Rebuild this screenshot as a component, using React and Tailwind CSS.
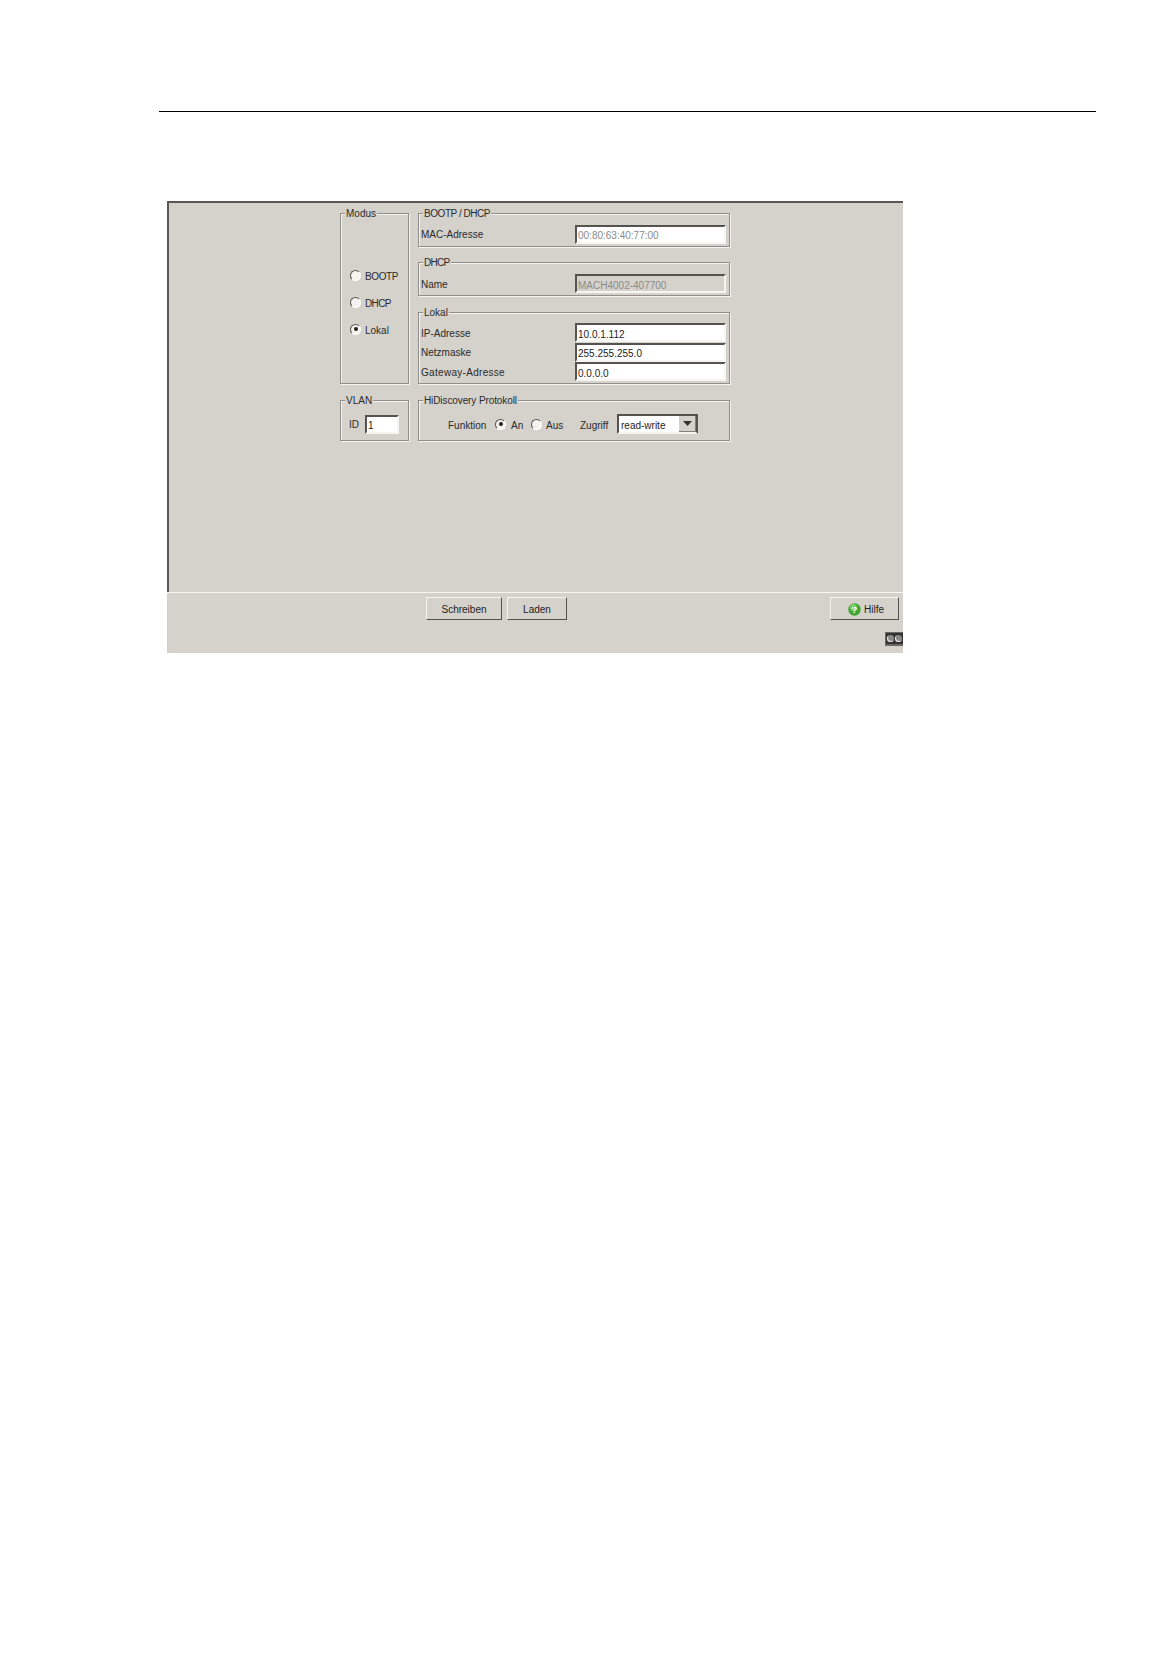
import React from 'react'

const Radio = ({ checked, className = '' }) => (
  <span className={`relative block w-[11px] h-[11px] rounded-full bg-[#f4f3f0] border border-t-[#55534f] border-l-[#55534f] border-r-white border-b-white flex-shrink-0 flex items-center justify-center ${className}`}>
    {checked && <span className="block w-[4px] h-[4px] rounded-full bg-[#222]" />}
  </span>
)

const Group = ({ title, className, titleClass = '', children }) => (
  <div className={`border border-[#908e8a] shadow-[1px_1px_0_#f4f3f0,inset_1px_1px_0_#f4f3f0] ${className}`}>
    <div className={`w-fit -mt-[7px] ml-[4px] px-[1px] h-[13px] leading-[13px] bg-[#d5d2cc] text-[#2a2a2a] ${titleClass}`}>{title}</div>
    {children}
  </div>
)

const Field = ({ label, value, disabled, muted, lower, className = '', labelClass = '' }) => (
  <div className={`flex items-center justify-between pl-[2px] pr-[3px] ${className}`}>
    <span className={`text-[#2a2a2a] ${lower ? 'pt-[2px]' : ''} ${labelClass}`}>{label}</span>
    <div
      className={`w-[151px] h-[19px] pl-[1px] border-2 border-t-[#55534f] border-l-[#55534f] border-r-[#f6f5f2] border-b-[#f6f5f2] ${
        lower ? 'leading-[19px]' : 'leading-[17px]'
      } ${disabled ? 'bg-[#d5d2cc]' : 'bg-white'} ${muted ? 'text-[#8a8a88]' : 'text-[#1c1c1c]'}`}
    >
      {value}
    </div>
  </div>
)

const Button = ({ children, className = '' }) => (
  <div className={`h-[23px] pt-[1px] flex items-center border border-t-[#f6f5f2] border-l-[#f6f5f2] border-r-[#55534f] border-b-[#55534f] bg-[#d5d2cc] text-[#222] ${className}`}>
    {children}
  </div>
)

const App = () => {
  return (
    <div className="bg-white h-[1668px] overflow-hidden pt-[111px] font-['Liberation_Sans',Arial,sans-serif] text-[10px]">
      <div className="ml-[159px] w-[937px] h-[1px] bg-black" />

      <div className="mt-[89px] ml-[167px] w-[736px] bg-[#d5d2cc]">
        {/* Upper area */}
        <div className="h-[391px] border-t-2 border-l-2 border-[#5a5856] pt-[10px] pl-[171px] flex gap-[9px]">
          <div className="w-[69px] flex flex-col gap-[16px]">
            <Group title="Modus" className="h-[171px]">
              <div className="pl-[9px] pt-[50px] flex flex-col gap-[15px]">
                {[
                  ['BOOTP', false, 'tracking-[-0.4px]'],
                  ['DHCP', false, 'tracking-[-0.6px]'],
                  ['Lokal', true, ''],
                ].map(([name, on, tracking]) => (
                  <div key={name} className="flex items-center gap-[4px] h-[12px] text-[#2a2a2a]">
                    <Radio checked={on} className="-mt-[2px]" />
                    <span className={tracking}>{name}</span>
                  </div>
                ))}
              </div>
            </Group>
            <Group title="VLAN" className="h-[41px]">
              <div className="flex items-center pl-[8px] pt-[8px] text-[#2a2a2a]">
                <span className="w-[16px]">ID</span>
                <div className="w-[34px] h-[19px] pl-[1px] leading-[17px] bg-white border-2 border-t-[#55534f] border-l-[#55534f] border-r-[#f6f5f2] border-b-[#f6f5f2] text-[#1c1c1c]">1</div>
              </div>
            </Group>
          </div>

          <div className="w-[312px] flex flex-col">
            <Group title="BOOTP / DHCP" titleClass="tracking-[-0.45px]" className="h-[34px]">
              <Field label="MAC-Adresse" value="00:80:63:40:77:00" muted className="mt-[5px]" />
            </Group>
            <Group title="DHCP" titleClass="tracking-[-0.7px]" className="h-[34px] mt-[15px]">
              <Field label="Name" value="MACH4002-407700" disabled muted lower className="mt-[5px]" />
            </Group>
            <Group title="Lokal" className="h-[72px] mt-[16px]">
              <div className="flex flex-col mt-[4px]">
                <Field label="IP-Adresse" value="10.0.1.112" lower />
                <Field label="Netzmaske" value="255.255.255.0" className="mt-[1px]" />
                <Field label="Gateway-Adresse" value="0.0.0.0" lower labelClass="tracking-[0.3px]" />
              </div>
            </Group>
            <Group title="HiDiscovery Protokoll" titleClass="tracking-[-0.1px]" className="h-[41px] mt-[16px]">
              <div className="flex items-center pl-[29px] mt-[7px] h-[20px] text-[#2a2a2a]">
                <span className="w-[47px] pt-[2px]">Funktion</span>
                <Radio checked />
                <span className="w-[20px] ml-[5px] pt-[2px]">An</span>
                <Radio />
                <span className="w-[34px] ml-[4px] pt-[2px]">Aus</span>
                <span className="w-[37px] pt-[2px]">Zugriff</span>
                <div className="w-[81px] h-[20px] flex items-center justify-between pl-[1px] bg-white border-2 border-t-[#55534f] border-l-[#55534f] border-r-[#55534f] border-b-[#f6f5f2] text-[#1c1c1c]">
                  <span className="pl-[1px] pt-[2px]">read-write</span>
                  <span className="w-[17px] h-[16px] flex items-center justify-center bg-[#d5d2cc] border-r border-b border-[#807e7a]">
                    <svg width="9" height="5" viewBox="0 0 9 5"><path d="M0 0h9L4.5 5z" fill="#333" /></svg>
                  </span>
                </div>
              </div>
            </Group>
          </div>
        </div>

        {/* Button bar */}
        <div className="h-[61px] border-t border-[#f6f5f2] pt-[4px] pl-[259px] pr-[4px]">
          <div className="flex">
            <Button className="w-[76px] justify-center">Schreiben</Button>
            <Button className="w-[60px] ml-[5px] justify-center">Laden</Button>
            <Button className="w-[69px] ml-auto pl-[17px] gap-[3px]">
              <svg width="13" height="13" viewBox="0 0 13 13">
                <circle cx="6.5" cy="6.5" r="6.2" fill="#3fa535" />
                <circle cx="5.5" cy="4.5" r="3.6" fill="#7fce6a" />
                <text x="6.5" y="10" textAnchor="middle" fontSize="9.5" fontWeight="700" fill="#fff" fontFamily="Liberation Sans">?</text>
              </svg>
              <span>Hilfe</span>
            </Button>
          </div>
          <div className="mt-[12px] -mr-[4px] ml-auto w-[18px] h-[14px] bg-[#6a6966] pt-[1px] pl-[1px] overflow-hidden">
            <div className="h-[11px] bg-[#333] flex items-center gap-[1px] pl-[1px]">
              <span className="flex-shrink-0 w-[7px] h-[7px] rounded-full bg-[#8a8a88] shadow-[inset_1px_-1px_0_#e8e8e6]" />
              <span className="flex-shrink-0 w-[7px] h-[7px] rounded-full bg-[#8a8a88] shadow-[inset_1px_-1px_0_#e8e8e6]" />
            </div>
          </div>
        </div>
      </div>
    </div>
  )
}

export default App
